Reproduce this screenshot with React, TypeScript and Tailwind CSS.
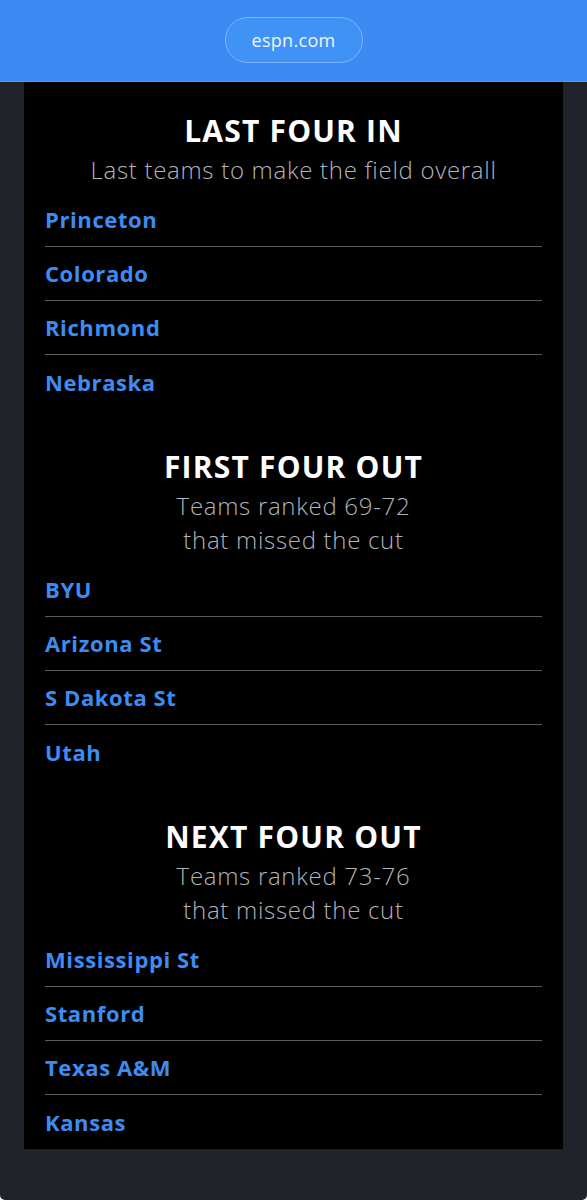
const sections = [
  {
    title: 'LAST FOUR IN',
    lines: ['Last teams to make the field overall'],
    teams: ['Princeton', 'Colorado', 'Richmond', 'Nebraska'],
  },
  {
    title: 'FIRST FOUR OUT',
    lines: ['Teams ranked 69-72', 'that missed the cut'],
    teams: ['BYU', 'Arizona St', 'S Dakota St', 'Utah'],
  },
  {
    title: 'NEXT FOUR OUT',
    lines: ['Teams ranked 73-76', 'that missed the cut'],
    teams: ['Mississippi St', 'Stanford', 'Texas A&M', 'Kansas'],
  },
]

function Section({ title, lines, teams, first }: { title: string; lines: string[]; teams: string[]; first: boolean }) {
  return (
    <div className={first ? '' : 'mt-[40px]'}>
      <h2 className="text-center text-[30px] leading-[36px] font-bold text-white tracking-[1.2px]">{title}</h2>
      <div className="mt-[4px] text-center text-[24px] leading-[34px] font-[350] text-[#b1b4bb] tracking-[0.7px]">
        {lines.map((l) => (
          <p key={l}>{l}</p>
        ))}
      </div>
      <ul className="mt-[6px]">
        {teams.map((t, i) => (
          <li
            key={t}
            className={`h-[54px] flex items-center text-[22px] font-bold text-[#3d8cf2] tracking-[0.6px] ${
              i < teams.length - 1 ? 'border-b border-[#5b5d66]' : ''
            }`}
          >
            {t}
          </li>
        ))}
      </ul>
    </div>
  )
}

export default function App() {
  return (
    <div className="h-[1200px] w-[587px] bg-white" style={{ fontFamily: '"Open Sans", "Liberation Sans", sans-serif' }}>
      <div className="h-[1200px] bg-[#21232b] rounded-b-[5px] overflow-hidden flex flex-col">
        <header className="h-[82px] shrink-0 bg-[#3d8bf2] border-b border-[#4d9bff] flex items-start justify-center pt-[17px]">
          <div className="h-[46px] w-[138px] rounded-full border border-[#78b6ff] bg-[#4192f5] flex items-center justify-center text-[18px] text-[#eef5ff] tracking-[0.3px]">
            espn.com
          </div>
        </header>
        <main className="mx-[24px] bg-black px-[21px] pt-[31px]">
          {sections.map((s, i) => (
            <Section key={s.title} {...s} first={i === 0} />
          ))}
        </main>
      </div>
    </div>
  )
}
